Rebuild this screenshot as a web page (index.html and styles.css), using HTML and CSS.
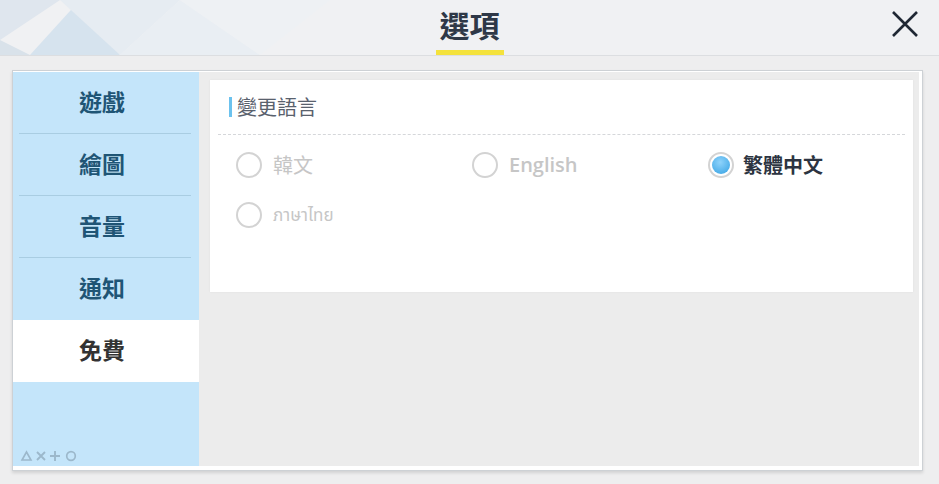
FILE: index.html
```html
<!DOCTYPE html>
<html lang="zh-Hant">
<head>
<meta charset="utf-8">
<link rel="stylesheet" href="styles.css">
</head>
<body>
<header class="topbar">
  <svg class="deco" width="420" height="55" viewBox="0 0 420 55">
    <polygon points="0,0 60,0 0,40" fill="#dfe6ee"/>
    <polygon points="30,55 80,0 120,55" fill="#d6e3ee"/>
    <polygon points="60,0 180,0 120,55" fill="#e6ecf2"/>
    <polygon points="120,55 180,0 260,55" fill="#e9eef3"/>
    <polygon points="0,40 30,55 0,55" fill="#d9e2ea"/>
    <polygon points="180,0 330,0 260,55" fill="#eef1f4"/>
  </svg>
  <h1 class="title">選項</h1>
  <button class="close" aria-label="close">
    <svg width="30" height="30" viewBox="0 0 30 30"><path d="M3 3 L27 27 M27 3 L3 27" stroke="#1f2733" stroke-width="2.6" fill="none"/></svg>
  </button>
</header>
<main class="stage">
  <div class="panel">
    <nav class="sidebar">
      <div class="item">遊戲</div>
      <div class="item">繪圖</div>
      <div class="item">音量</div>
      <div class="item last">通知</div>
      <div class="item active">免費</div>
      <div class="spacer"></div>
      <div class="symbols">
        <svg width="64" height="13" viewBox="0 0 64 13">
          <polygon points="2,11 6.5,3 11,11" fill="none" stroke="#9cb8cb" stroke-width="1.6"/>
          <path d="M17 3 L25 11 M25 3 L17 11" stroke="#9cb8cb" stroke-width="1.9"/>
          <path d="M35 2 L35 12 M30 7 L40 7" stroke="#9cb8cb" stroke-width="1.9"/>
          <circle cx="51" cy="7" r="4.3" fill="none" stroke="#9cb8cb" stroke-width="1.7"/>
        </svg>
      </div>
    </nav>
    <section class="content">
      <div class="card">
        <div class="card-title"><span class="bar"></span>變更語言</div>
        <div class="options">
          <label class="opt disabled"><span class="radio"></span><span class="lbl">韓文</span></label>
          <label class="opt disabled"><span class="radio"></span><span class="lbl en">English</span></label>
          <label class="opt selected"><span class="radio"><span class="dot"></span></span><span class="lbl">繁體中文</span></label>
          <label class="opt disabled"><span class="radio"></span><span class="lbl th">ภาษาไทย</span></label>
        </div>
      </div>
    </section>
  </div>
</main>
</body>
</html>
```
FILE: styles.css
```css
html, body {
  margin: 0;
  padding: 0;
  width: 939px;
  height: 484px;
  overflow: hidden;
  background: #eeeeef;
  font-family: "Noto Sans CJK TC", "Noto Sans", sans-serif;
}
.topbar {
  position: relative;
  height: 56px;
  background: #f0f1f3;
  border-bottom: 1px solid #dcdee1;
  display: flex;
  justify-content: center;
  align-items: flex-start;
  box-sizing: border-box;
}
.deco {
  position: absolute;
  left: 0;
  top: 0;
}
.title {
  position: relative;
  margin: 0;
  padding: 4px 4px 0;
  height: 55px;
  box-sizing: border-box;
  font-size: 30px;
  line-height: 40px;
  font-weight: 700;
  color: #2e3847;
  border-bottom: 5px solid #f4e23c;
}
.close {
  position: absolute;
  right: 19px;
  top: 9px;
  padding: 0;
  border: 0;
  background: none;
  width: 30px;
  height: 30px;
}
.stage {
  padding: 15px 16px 13px 12px;
  height: 484px;
  box-sizing: border-box;
  margin-top: -56px;
  padding-top: 70px;
}
.panel {
  display: flex;
  height: 100%;
  background: #ffffff;
  border: 1px solid #cdd1d5;
  box-shadow: 0 2px 3px rgba(0,0,0,0.12);
  padding: 1px 3px 4px 0;
  box-sizing: border-box;
}
.sidebar {
  width: 186px;
  background: #c4e5fa;
  display: flex;
  flex-direction: column;
  flex-shrink: 0;
}
.item {
  height: 62px;
  box-sizing: border-box;
  display: flex;
  align-items: center;
  justify-content: center;
  padding-right: 8px;
  padding-bottom: 4px;
  font-size: 23px;
  font-weight: 700;
  color: #1f5575;
  position: relative;
}
.item::after {
  content: "";
  position: absolute;
  left: 6px;
  right: 8px;
  bottom: 0;
  height: 1px;
  background: #a9cde2;
}
.item.last::after, .item.active::after {
  display: none;
}
.item.active {
  background: #ffffff;
  color: #333333;
}
.spacer {
  flex: 1;
}
.symbols {
  padding: 0 0 4px 7px;
  height: 13px;
}
.symbols svg {
  display: block;
}
.content {
  flex: 1;
  background: #ececec;
  padding: 8px 6px 0 11px;
}
.card {
  background: #ffffff;
  height: 212px;
  box-sizing: border-box;
  padding: 14px 8px 0 8px;
  box-shadow: 0 0 2px rgba(0,0,0,0.06);
}
.card-title {
  display: flex;
  align-items: center;
  font-size: 20px;
  line-height: 26px;
  color: #59616d;
  padding-left: 11px;
  padding-bottom: 14px;
  border-bottom: 1px dashed #d5d7da;
}
.bar {
  width: 3px;
  height: 20px;
  background: #6cc2ee;
  margin-right: 5px;
}
.options {
  display: grid;
  grid-template-columns: 236px 236px 1fr;
  row-gap: 23px;
  padding: 16px 0 0 18px;
}
.opt {
  display: flex;
  align-items: center;
  height: 27px;
}
.radio {
  width: 22px;
  height: 22px;
  border: 2px solid #d3d3d3;
  border-radius: 50%;
  box-sizing: content-box;
  margin-right: 11px;
  display: flex;
  align-items: center;
  justify-content: center;
  background: #fff;
}
.dot {
  width: 18px;
  height: 18px;
  border-radius: 50%;
  background: radial-gradient(circle at 45% 35%, #8fd3fb 0%, #4fb0ea 70%, #3d9fdc 100%);
}
.lbl {
  font-size: 20px;
  line-height: 27px;
  color: #c6c6c6;
}
.lbl.en {
  font-family: "Open Sans", sans-serif;
  font-weight: 600;
  font-size: 20px;
}
.lbl.th {
  font-family: "Noto Sans", "Noto Sans Thai", sans-serif;
  font-size: 17px;
}
.opt.selected .lbl {
  color: #2c3441;
  font-weight: 700;
}
.opt.selected .radio {
  margin-right: 9px;
}
```
